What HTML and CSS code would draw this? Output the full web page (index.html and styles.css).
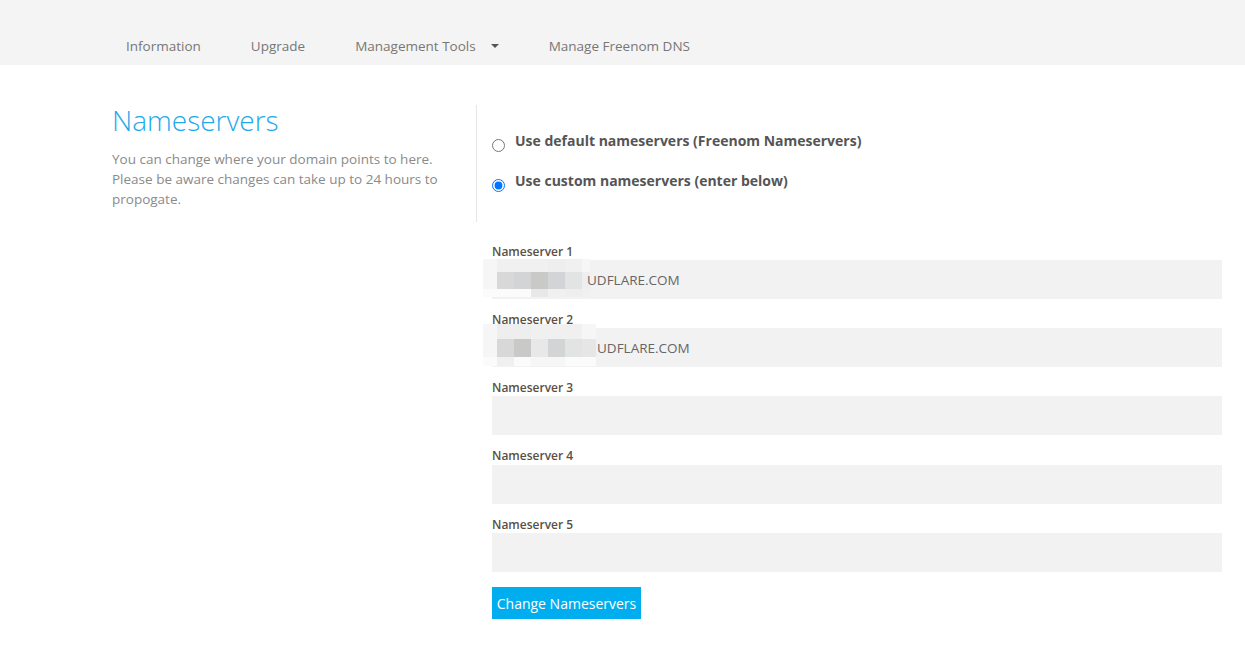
FILE: index.html
```html
<!DOCTYPE html>
<html lang="en">
<head>
<meta charset="utf-8">
<title>Nameservers</title>
<link rel="stylesheet" href="styles.css">
</head>
<body>
<header class="topbar">
  <nav class="nav">
    <a class="nav-item" href="#">Information</a>
    <a class="nav-item" href="#">Upgrade</a>
    <a class="nav-item" href="#">Management Tools<span class="caret"></span></a>
    <a class="nav-item" href="#">Manage Freenom DNS</a>
  </nav>
</header>

<main class="page">
  <section class="intro">
    <h1 class="title">Nameservers</h1>
    <p class="lead">You can change where your domain points to here. Please be aware changes can take up to 24 hours to propogate.</p>
  </section>

  <section class="options">
    <label class="radio-row"><input type="radio" name="ns" class="radio"><span>Use default nameservers (Freenom Nameservers)</span></label>
    <label class="radio-row"><input type="radio" name="ns" class="radio" checked><span>Use custom nameservers (enter below)</span></label>
  </section>

  <form class="fields">
    <div class="field">
      <label class="field-label">Nameserver 1</label>
      <div class="input input-ns1">
        <div class="mosaic">
          <i class="c1"></i><i class="c2"></i><i class="c2"></i><i class="c2"></i><i class="c3"></i><i class="c2"></i><i class="c1"></i>
          <i class="c1"></i><i class="d1"></i><i class="d2"></i><i class="d3"></i><i class="d2"></i><i class="d4"></i><i class="c3"></i>
          <i class="c0"></i><i class="c0"></i><i class="c0"></i><i class="c4"></i><i class="c2"></i><i class="c3"></i><i class="c2"></i>
        </div>
        <span class="value">UDFLARE.COM</span>
      </div>
    </div>
    <div class="field">
      <label class="field-label">Nameserver 2</label>
      <div class="input input-ns2">
        <div class="mosaic">
          <i class="c1"></i><i class="c3"></i><i class="c3"></i><i class="c2"></i><i class="c2"></i><i class="c2"></i><i class="c1"></i>
          <i class="c1"></i><i class="d1"></i><i class="d3"></i><i class="c4"></i><i class="d2"></i><i class="d4"></i><i class="d5"></i>
          <i class="c0"></i><i class="c2"></i><i class="c0"></i><i class="c1"></i><i class="c1"></i><i class="c0"></i><i class="c0"></i>
        </div>
        <span class="value">UDFLARE.COM</span>
      </div>
    </div>
    <div class="field">
      <label class="field-label">Nameserver 3</label>
      <div class="input"></div>
    </div>
    <div class="field field-wide">
      <label class="field-label label-tall">Nameserver 4</label>
      <div class="input"></div>
    </div>
    <div class="field">
      <label class="field-label">Nameserver 5</label>
      <div class="input"></div>
    </div>
    <button type="button" class="btn">Change Nameservers</button>
  </form>
</main>
</body>
</html>
```

FILE: styles.css
```css
* { box-sizing: border-box; }

html, body {
  margin: 0;
  padding: 0;
  background: #ffffff;
  font-family: "Open Sans", "Liberation Sans", sans-serif;
  color: #666;
}

.topbar {
  background: #f4f4f4;
  height: 65px;
  padding: 27px 0 0 101px;
}

.nav {
  display: flex;
  height: 37px;
}

.nav-item {
  display: flex;
  align-items: center;
  padding: 0 25px;
  font-size: 13.5px;
  color: #777;
  text-decoration: none;
  line-height: 36px;
}

.caret {
  display: inline-block;
  margin-left: 15px;
  margin-top: 1px;
  width: 0;
  height: 0;
  border-left: 4px solid transparent;
  border-right: 4px solid transparent;
  border-top: 4px solid #555;
}

.page {
  display: grid;
  grid-template-columns: 365px 1fr;
  grid-template-rows: auto auto;
  padding: 40px 23px 40px 112px;
}

.intro {
  grid-column: 1;
  grid-row: 1;
  border-right: 1px solid #e6e6e6;
  padding: 0 25px 13px 0;
}

.title {
  margin: 0;
  font-size: 28px;
  font-weight: 300;
  line-height: 30px;
  color: #1ea9ea;
}

.lead {
  margin: 14px 0 0;
  font-size: 13.5px;
  line-height: 20px;
  color: #8a8a8a;
}

.options {
  grid-column: 2;
  grid-row: 1;
  padding: 26px 0 0 15px;
  display: flex;
  flex-direction: column;
  gap: 19px;
}

.radio-row {
  display: flex;
  align-items: flex-start;
  font-size: 14px;
  line-height: 20px;
  font-weight: 700;
  color: #555;
}

.radio {
  margin: 8px 10px 0 0;
  width: 13px;
  height: 13px;
  flex: none;
}

.fields {
  grid-column: 2;
  grid-row: 2;
  margin: 21px 0 0;
  padding-left: 15px;
  display: flex;
  flex-direction: column;
}

.field {
  display: flex;
  flex-direction: column;
  margin-bottom: 12px;
}

.field-wide { margin-bottom: 12px; }

.field-label {
  font-size: 12px;
  line-height: 17px;
  font-weight: 600;
  color: #5a4f45;
}

.label-tall { line-height: 18px; padding-bottom: 0; }

.input {
  position: relative;
  height: 39px;
  background: #f2f2f2;
  display: flex;
  align-items: center;
  font-size: 13.5px;
  color: #666;
}

.input-ns1 { padding-left: 95px; }
.input-ns2 { padding-left: 105px; }

.value { position: relative; }

.mosaic {
  position: absolute;
  left: -9px;
  top: -1px;
  display: grid;
  grid-template-columns: 14px repeat(5, 17px) 8px;
  grid-template-rows: 13px 17px 8px;
}
.input-ns2 .mosaic {
  top: -4px;
  grid-template-columns: 14px repeat(5, 17px) 14px;
  grid-template-rows: 15px 18px 9px;
}

.mosaic i { display: block; }
.c0 { background: #fbfbfb; }
.c1 { background: #f6f6f6; }
.c2 { background: #f0f0f0; }
.c3 { background: #eeeeee; }
.c4 { background: #e8e8e8; }
.d1 { background: #d8d8d8; }
.d2 { background: #d3d4d5; }
.d3 { background: #c9c9c8; }
.d4 { background: #e2e3e3; }
.d5 { background: #e6e6e6; }

.btn {
  align-self: flex-start;
  margin-top: 3px;
  height: 32px;
  width: 149px;
  padding: 0;
  border: 0;
  background: #00aeef;
  color: #fff;
  font-family: "Open Sans", "Liberation Sans", sans-serif;
  font-size: 14px;
  cursor: pointer;
}
```
